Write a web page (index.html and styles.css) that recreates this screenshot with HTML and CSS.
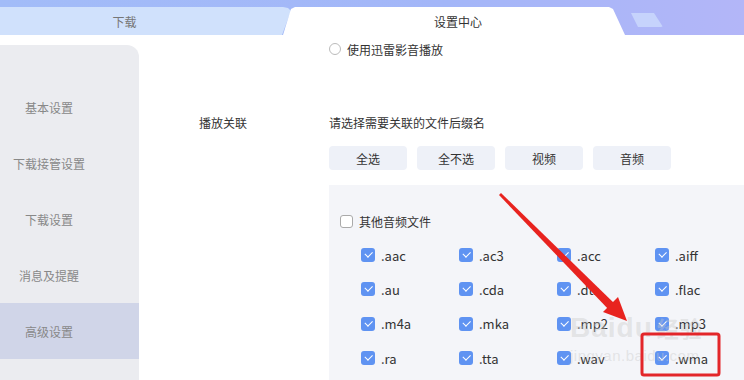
FILE: index.html
```html
<!DOCTYPE html>
<html lang="zh">
<head>
<meta charset="utf-8">
<link rel="stylesheet" href="styles.css">
</head>
<body>
<div class="app">
  <div class="topbar">
    <div class="tab tab-left">下载</div>
    <div class="tab tab-active">设置中心</div>
    <div class="tab-deco"></div>
  </div>
  <div class="body">
    <aside class="sidebar">
      <div class="nav-item">基本设置</div>
      <div class="nav-item">下载接管设置</div>
      <div class="nav-item">下载设置</div>
      <div class="nav-item">消息及提醒</div>
      <div class="nav-item active">高级设置</div>
      <div class="nav-item"></div>
    </aside>
    <main class="main">
      <div class="row radio-row">
        <div class="label"></div>
        <div class="content">
          <label class="radio"><span class="radio-dot"></span>使用迅雷影音播放</label>
        </div>
      </div>
      <div class="row assoc-row">
        <div class="label">播放关联</div>
        <div class="content">
          <div class="hint">请选择需要关联的文件后缀名</div>
          <div class="btns">
            <button class="btn">全选</button>
            <button class="btn">全不选</button>
            <button class="btn">视频</button>
            <button class="btn">音频</button>
          </div>
          <div class="panel">
            <label class="check-head"><span class="cb"></span>其他音频文件</label>
            <div class="grid">
              <label class="item"><span class="cb on"></span>.aac</label>
              <label class="item"><span class="cb on"></span>.ac3</label>
              <label class="item"><span class="cb on"></span>.acc</label>
              <label class="item"><span class="cb on"></span>.aiff</label>
              <label class="item"><span class="cb on"></span>.au</label>
              <label class="item"><span class="cb on"></span>.cda</label>
              <label class="item"><span class="cb on"></span>.dts</label>
              <label class="item"><span class="cb on"></span>.flac</label>
              <label class="item"><span class="cb on"></span>.m4a</label>
              <label class="item"><span class="cb on"></span>.mka</label>
              <label class="item"><span class="cb on"></span>.mp2</label>
              <label class="item"><span class="cb on"></span>.mp3</label>
              <label class="item"><span class="cb on"></span>.ra</label>
              <label class="item"><span class="cb on"></span>.tta</label>
              <label class="item"><span class="cb on"></span>.wav</label>
              <label class="item"><span class="cb on"></span>.wma</label>
            </div>
          </div>
        </div>
      </div>
    </main>
  </div>
  <div class="watermark">
    <span class="wm-big">Baidu<span class="wm-cn">经验</span></span>
    <span class="wm-small">jingyan.baidu.com</span>
  </div>
  <svg class="annot" width="744" height="380" viewBox="0 0 744 380">
    <polygon points="499,195 501,193 616,305 610,311" fill="#e8231f"/>
    <polygon points="627,321 603,312 618,297" fill="#e8231f"/>
    <rect x="642" y="334" width="77" height="41" rx="2" fill="none" stroke="#e3262a" stroke-width="3"/>
  </svg>
</div>
</body>
</html>
```

FILE: styles.css
```css
* { box-sizing: border-box; }
html, body { margin: 0; padding: 0; }
body {
  width: 744px;
  height: 380px;
  overflow: hidden;
  background: #fff;
  font-family: "Noto Sans CJK SC", "Noto Sans", sans-serif;
  font-size: 12px;
  color: #333;
}
.app { position: relative; width: 744px; height: 380px; overflow: hidden; }

.topbar {
  height: 35px;
  display: flex;
  align-items: flex-end;
  background: linear-gradient(90deg, #a2bcf8 0%, #a3b6f8 60%, #b3b6f8 100%);
}
.tab {
  height: 28px;
  display: flex;
  align-items: center;
  justify-content: center;
  font-size: 12px;
}
.tab-left {
  width: 291px;
  background: #d0e1fc;
  color: #777;
  clip-path: polygon(0 0, 283px 0, 288px 1px, 291px 4px, 282px 100%, 0 100%);
  padding-right: 42px;
}
.tab-active {
  width: 342px;
  margin-left: -8px;
  background: #fff;
  color: #333;
  clip-path: polygon(8px 2px, 12px 0, 326px 0, 330px 2px, 342px 100%, 0 100%);
  padding-left: 8px;
}
.tab-deco {
  width: 34px;
  height: 14px;
  margin-left: 4px;
  margin-bottom: 8px;
  background: #c6d3fc;
  clip-path: polygon(2px 0, 25px 0, 34px 100%, 9px 100%);
  border-radius: 2px;
}

.body { display: flex; height: 345px; }
.sidebar {
  width: 139px;
  margin-top: 10px;
  background: #ebecf0;
  border-top-right-radius: 12px;
  padding-top: 34px;
  display: flex;
  flex-direction: column;
}
.nav-item {
  height: 56px;
  width: 98px;
  display: flex;
  align-items: center;
  justify-content: center;
  color: #888;
  font-size: 12px;
  flex-shrink: 0;
}
.nav-item.active {
  width: 139px;
  padding-right: 41px;
  background: #d0d5e8;
}

.main { flex: 1; padding-left: 60px; }
.row { display: flex; }
.label { width: 130px; flex-shrink: 0; font-size: 12px; color: #333; }
.content { flex: 1; }
.radio-row { height: 28px; align-items: center; }
.radio { display: flex; align-items: center; font-size: 12px; color: #333; }
.radio-dot {
  width: 12px; height: 12px;
  border: 1px solid #bbb;
  border-radius: 50%;
  background: #fff;
  margin-right: 6px;
}
.assoc-row { margin-top: 50px; }
.assoc-row .label { line-height: 20px; }
.hint { line-height: 20px; font-size: 12px; color: #333; }
.btns { display: flex; gap: 10px; margin-top: 13px; }
.btn {
  width: 78px; height: 24px;
  border: none;
  border-radius: 4px;
  background: #eef1f8;
  font-family: inherit;
  font-size: 12px;
  color: #333;
  padding: 0;
}
.panel {
  margin-top: 15px;
  background: #f4f5f9;
  height: 220px;
  padding: 29px 0 0 11px;
}
.check-head { display: flex; align-items: center; height: 14px; font-size: 12px; color: #333; }
.cb {
  width: 13px; height: 13px;
  border: 1px solid #aaa;
  border-radius: 3px;
  background: #fff;
  margin-right: 6px;
  flex-shrink: 0;
  position: relative;
}
.cb.on {
  width: 14px; height: 14px;
  border: none;
  background: #5f93f2;
  margin-right: 6px;
}
.cb.on::after {
  content: "";
  position: absolute;
  left: 4px; top: 3px;
  width: 6px; height: 3.5px;
  border-left: 1.5px solid #fff;
  border-bottom: 1.5px solid #fff;
  transform: rotate(-45deg);
}
.grid {
  display: grid;
  grid-template-columns: repeat(4, 98px);
  grid-auto-rows: 34.3px;
  margin-top: 10px;
  margin-left: 21px;
}
.item { display: flex; align-items: center; font-size: 13px; color: #333; }

.watermark {
  position: absolute;
  left: 570px;
  top: 312px;
  display: flex;
  flex-direction: column;
  pointer-events: none;
  color: rgba(200,200,200,0.4);
  font-family: "Liberation Sans", sans-serif;
}
.wm-big { font-size: 28px; font-weight: bold; line-height: 30px; letter-spacing: 1px; }
.wm-cn { font-family: "Noto Sans CJK SC", sans-serif; font-size: 22px; margin-left: 4px; }
.wm-small { font-size: 15px; line-height: 18px; margin-top: 4px; letter-spacing: 0.5px; }

.annot { position: absolute; left: 0; top: 0; pointer-events: none; }
```
